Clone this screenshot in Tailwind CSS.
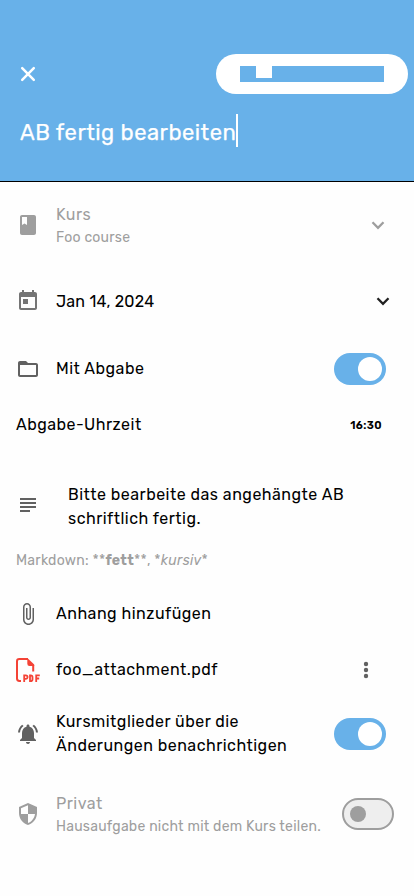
<!DOCTYPE html>
<html lang="de">
<head>
<meta charset="utf-8">
<title>Hausaufgabe bearbeiten</title>
<script src="https://cdn.jsdelivr.net/npm/@tailwindcss/browser@4"></script>
</head>
<body class="w-[414px] h-[896px] overflow-hidden bg-[#fefefe] font-['Rubik',Roboto,sans-serif] text-base leading-6 text-black">
<header class="h-[182px] bg-[#68b1e9] border-b border-black pt-[54px]">
  <div class="flex items-center justify-between pl-4 pr-1.5 h-10">
    <svg class="size-6" viewBox="0 0 24 24" fill="none" stroke="#fff" stroke-width="2.5" stroke-linecap="round"><path d="M6.200 6.200l11.600 11.600M17.800 6.200l-11.600 11.600"/></svg>
    <div class="w-48 h-10 rounded-full bg-white pt-3 pl-6">
      <div class="w-36 h-4 bg-[#68b1e9] pl-4"><div class="w-4 h-3 bg-white"></div></div>
    </div>
  </div>
  <div class="flex items-center h-[33px] mt-5 pl-5 text-white">
    <span class="text-[22px] pt-[5px] tracking-[0.48px] whitespace-nowrap w-[216px] [-webkit-text-stroke:0.25px_white]">AB fertig bearbeiten</span>
    <span class="w-0.5 h-[33px] bg-white"></span>
  </div>
</header>
<main>
  <section class="flex items-center h-[86px] pl-4 pr-6 text-[#9e9e9e]">
    <svg class="size-6 mr-4" viewBox="0 0 24 24" fill="currentColor"><path d="M18 2H6c-1.100 0-2 .9-2 2v16c0 1.100.9 2 2 2h12c1.100 0 2-.9 2-2V4c0-1.100-.9-2-2-2zM6 4h5v8l-2.500-1.500L6 12V4z"/></svg>
    <div class="flex-1"><p class="tracking-[0.5px]">Kurs</p><p class="text-sm leading-5 pt-px -mb-px tracking-[0.22px]">Foo course</p></div>
    <svg class="size-6" viewBox="0 0 24 24" fill="none" stroke="currentColor" stroke-width="2.300"><path d="M6.500 9.300L12 14.800l5.500-5.500"/></svg>
  </section>
  <section class="flex items-center h-[66px] pl-4 pr-[19px]">
    <svg class="size-6 mr-4" viewBox="0 0 24 24" fill="#757575"><path d="M19 3h-1V1h-2v2H8V1H6v2H5c-1.110 0-1.990.9-1.990 2L3 19c0 1.100.89 2 2 2h14c1.100 0 2-.9 2-2V5c0-1.100-.9-2-2-2zm0 16H5V8h14v11zM7 10h5v5H7z"/></svg>
    <p class="flex-1 pt-0.5 tracking-[0.22px]">Jan 14, 2024</p>
    <svg class="size-6" viewBox="0 0 24 24" fill="none" stroke="#212121" stroke-width="2.300"><path d="M6.500 9.300L12 14.800l5.500-5.500"/></svg>
  </section>
  <section class="flex items-center h-[70px] pl-4 pr-7">
    <svg class="size-6 mr-4" viewBox="0 0 24 24" fill="#616161"><path d="M20 6h-8l-2-2H4c-1.100 0-1.990.9-1.990 2L2 18c0 1.100.9 2 2 2h16c1.100 0 2-.9 2-2V8c0-1.100-.9-2-2-2zm0 12H4V8h16v10z"/></svg>
    <p class="flex-1 tracking-[0.5px]">Mit Abgabe</p>
    <div class="w-[52px] h-8 rounded-full bg-[#68b1e9] flex items-center justify-end pr-1"><div class="size-6 rounded-full bg-white"></div></div>
  </section>
  <section class="flex items-center h-[42px] pl-4 pr-8">
    <p class="flex-1 tracking-[0.48px]">Abgabe-Uhrzeit</p>
    <p class="text-[11px] font-semibold pt-0.5 tracking-[0.4px]">16:30</p>
  </section>
  <section class="pt-[37px] pl-4">
    <div class="flex items-center">
      <svg class="size-6 mr-7 -mt-1" viewBox="0 0 24 24" fill="#616161"><path d="M4 5h16v2H4zM4 9h16v2H4zM4 13h16v2H4zM4 17h10v2H4z"/></svg>
      <p class="tracking-[0.48px] whitespace-nowrap">Bitte bearbeite das angehängte AB<br>schriftlich fertig.</p>
    </div>
    <p class="mt-5 text-sm leading-5 tracking-[0.25px] text-[#9e9e9e]">Markdown: **<b>fett</b>**, *<i>kursiv</i>*</p>
  </section>
  <section class="flex items-center mt-[15px] h-14 pl-4">
    <svg class="size-6 mr-4" viewBox="0 0 24 24" fill="#616161"><path d="M16.500 6v11.500c0 2.210-1.790 4-4 4s-4-1.790-4-4V5c0-1.380 1.120-2.500 2.500-2.500s2.500 1.120 2.500 2.500v10.500c0 .55-.45 1-1 1s-1-.45-1-1V6H10v9.500c0 1.380 1.120 2.500 2.500 2.500s2.500-1.120 2.500-2.500V5c0-2.210-1.790-4-4-4S7 2.790 7 5v12.500c0 3.040 2.460 5.500 5.500 5.500s5.500-2.460 5.500-5.500V6h-1.500z"/></svg>
    <p class="tracking-[0.48px]">Anhang hinzufügen</p>
  </section>
  <section class="flex items-center h-14 pl-4 pr-9">
    <svg class="size-6 mr-4" viewBox="0 0 24 24" fill="none" stroke="#f44336" stroke-width="2"><path d="M5 23H3.400Q1 23 1 20.600V3.200Q1 1 3.300 1H12M17.200 7v6.500"/><path d="M11.300 0L18.200 6.500V8h-4.600q-2.300 0-2.300-2.300z" fill="#f44336" stroke="none"/><g stroke-width="1.800"><path d="M8.200 24v-6.700h1.600a1.600 1.600 0 0 1 0 3.500H8.200M14 17.300v5.800h.7q1.800 0 1.800-1.900v-2q0-1.900-1.800-1.900zM20.200 24v-6.700h3.600M20.200 20.500h3"/></g></svg>
    <p class="flex-1 tracking-[0.48px]">foo_attachment.pdf</p>
    <svg class="size-6" viewBox="0 0 24 24" fill="#616161"><circle cx="12" cy="6" r="2.200"/><circle cx="12" cy="12" r="2.200"/><circle cx="12" cy="18" r="2.200"/></svg>
  </section>
  <section class="flex items-center h-[72px] pl-4 pr-7">
    <svg class="size-6 mr-4" viewBox="0 0 24 24" fill="#616161"><path d="M7.580 4.080L6.150 2.650C3.750 4.480 2.170 7.300 2.030 10.500h2c.15-2.650 1.510-4.970 3.550-6.420zm12.390 6.420h2c-.15-3.200-1.730-6.020-4.120-7.850l-1.420 1.430c2.020 1.450 3.390 3.770 3.540 6.420zM18 11c0-3.070-1.640-5.640-4.500-6.320V4c0-.83-.67-1.500-1.500-1.500s-1.500.67-1.500 1.500v.68C7.630 5.360 6 7.920 6 11v5l-2 2v1h16v-1l-2-2v-5zm-6 11c.14 0 .27-.01.4-.04.65-.14 1.180-.58 1.440-1.180.1-.24.15-.5.15-.78h-4c.01 1.100.9 2 2.010 2z"/></svg>
    <p class="flex-1 tracking-[0.48px] whitespace-nowrap">Kursmitglieder über die<br>Änderungen benachrichtigen</p>
    <div class="w-[52px] h-8 rounded-full bg-[#68b1e9] flex items-center justify-end pr-1"><div class="size-6 rounded-full bg-white"></div></div>
  </section>
  <section class="flex items-center h-[88px] pl-4 pr-5 text-[#9e9e9e]">
    <svg class="size-6 mr-4" viewBox="0 0 24 24" fill="currentColor"><path d="M12 1L3 5v6c0 5.550 3.840 10.740 9 12 5.160-1.260 9-6.450 9-12V5l-9-4zm0 10.990h7c-.53 4.120-3.280 7.790-7 8.940V12H5V6.300l7-3.110v8.800z"/></svg>
    <div class="flex-1"><p class="tracking-[0.5px]">Privat</p><p class="text-sm leading-5 pt-px -mb-px tracking-[0.23px] whitespace-nowrap">Hausaufgabe nicht mit dem Kurs teilen.</p></div>
    <div class="w-[52px] h-8 rounded-full border-2 border-[#9e9e9e] bg-[#eeeeee] flex items-center pl-1.5"><div class="size-4 rounded-full bg-[#9e9e9e]"></div></div>
  </section>
</main>
</body>
</html>
